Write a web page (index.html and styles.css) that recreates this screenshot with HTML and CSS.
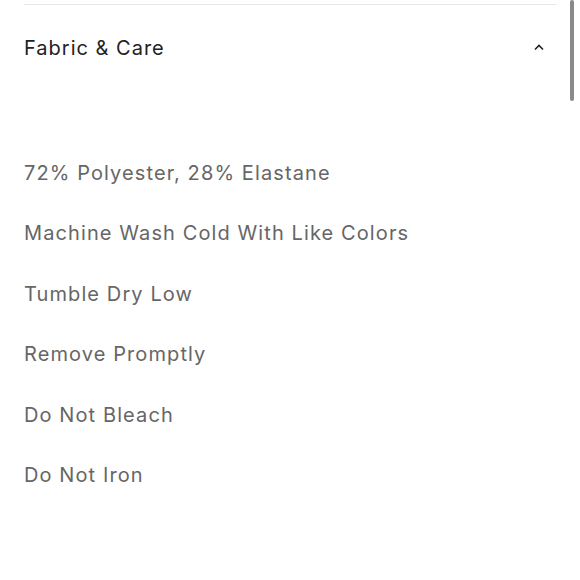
FILE: index.html
```html
<!DOCTYPE html>
<html>
<head>
<meta charset="utf-8">
<link rel="stylesheet" href="styles.css">
</head>
<body>
<div class="page">
  <section class="accordion">
    <div class="header">
      <h2 class="title">Fabric &amp; Care</h2>
      <svg class="chevron" width="12" height="8" viewBox="0 0 12 8"><path d="M2 6.5 L6 2.5 L10 6.5" fill="none" stroke="#222" stroke-width="1.6"/></svg>
    </div>
    <ul class="list">
      <li>72% Polyester, 28% Elastane</li>
      <li>Machine Wash Cold With Like Colors</li>
      <li>Tumble Dry Low</li>
      <li>Remove Promptly</li>
      <li>Do Not Bleach</li>
      <li>Do Not Iron</li>
    </ul>
  </section>
  <div class="scrollbar"></div>
</div>
</body>
</html>
```
FILE: styles.css
```css
html, body { margin: 0; padding: 0; background: #fff; }
body { font-family: Inter, "Liberation Sans", sans-serif; }
.page { position: relative; width: 580px; height: 580px; overflow: hidden; }
.accordion { margin: 0 24px; padding-top: 4px; }
.header {
  border-top: 1px solid #e6e6e6;
  display: flex; align-items: center; justify-content: space-between;
  height: 86px;
  padding-right: 11px;
}
.title { margin: 0; font-weight: 400; font-size: 20px; color: #222; letter-spacing: 1px; }
.chevron { display: block; margin-top: -2px; }
.list { list-style: none; margin: 0; padding: 0; padding-top: 69px; }
.list li { font-size: 20px; color: #666; height: 60.4px; line-height: 26px; letter-spacing: 1.1px; }
.scrollbar { position: absolute; right: 6px; top: 0; width: 4px; height: 101px; background: #8a8a8a; border-radius: 2px; }
```
